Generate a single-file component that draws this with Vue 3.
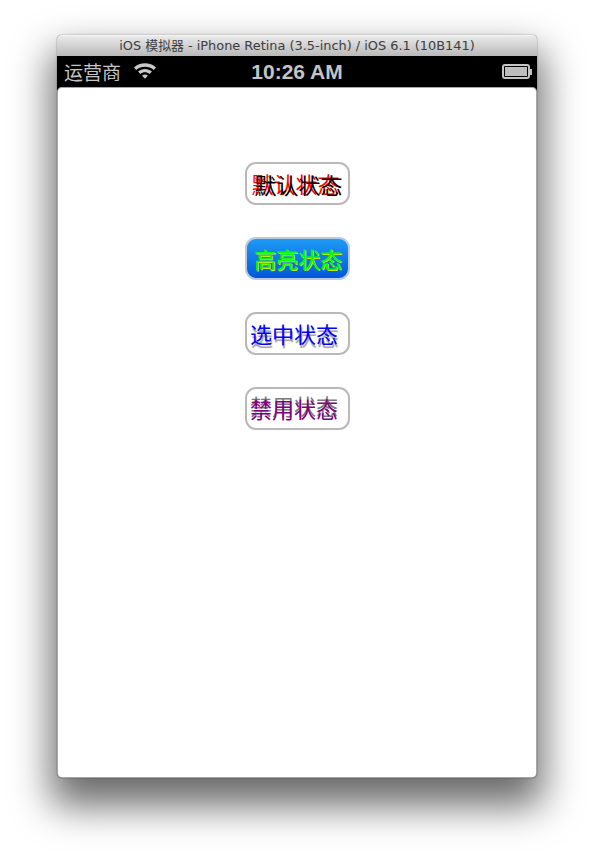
<script setup>
const buttons = [
  { label: '默认状态', kind: 'normal' },
  { label: '高亮状态', kind: 'highlighted' },
  { label: '选中状态', kind: 'selected' },
  { label: '禁用状态', kind: 'disabled' },
]
</script>

<template>
  <div class="page">
    <div class="window">
      <div class="titlebar">iOS 模拟器 - iPhone Retina (3.5-inch) / iOS 6.1 (10B141)</div>
      <div class="statusbar">
        <div class="status-left">
          <span class="carrier">运营商</span>
          <svg class="wifi" width="24" height="18" viewBox="0 0 24 18">
            <path d="M1 6.4C7 0.8 17 0.8 23 6.4L20.8 8.9C16 4.6 8 4.6 3.2 8.9Z" fill="#c9c9c9" />
            <path d="M5.1 10.6C9 7 15 7 18.9 10.6L16.7 13C14 10.6 10 10.6 7.3 13Z" fill="#c9c9c9" />
            <path d="M12 17.8L9.1 14.7C10.8 13.2 13.2 13.2 14.9 14.7Z" fill="#c9c9c9" />
          </svg>
        </div>
        <span class="time">10:26 AM</span>
        <div class="battery">
          <div class="battery-body"><div class="battery-fill"></div></div>
          <div class="battery-cap"></div>
        </div>
      </div>
      <div class="screen">
        <button v-for="b in buttons" :key="b.kind" class="btn" :class="b.kind" type="button">{{ b.label }}</button>
      </div>
    </div>
  </div>
</template>

<style scoped>
.page {
  width: 594px;
  height: 856px;
  padding: 35px 57px 0;
  box-sizing: border-box;
  background: #fff;
  overflow: hidden;
}
.window {
  width: 480px;
  height: 743px;
  display: flex;
  flex-direction: column;
  border-radius: 5px;
  box-shadow: 0 22px 38px 6px rgba(0, 0, 0, 0.58), 0 0 1px 1px rgba(0, 0, 0, 0.12);
  background: #000;
}
.titlebar {
  height: 21px;
  flex: none;
  border-radius: 5px 5px 0 0;
  background: linear-gradient(#ececec, #b9b9b9);
  color: #3d3d3d;
  font: 12.9px/22px "DejaVu Sans", "Noto Sans CJK SC", sans-serif;
  text-align: center;
  white-space: nowrap;
  box-shadow: inset 0 1px 0 #f6f6f6;
}
.statusbar {
  height: 31px;
  flex: none;
  position: relative;
  display: flex;
  align-items: center;
  justify-content: space-between;
  padding: 0 5px 0 7px;
  background: #000;
  color: #c4c4c4;
}
.status-left {
  display: flex;
  align-items: center;
  gap: 12px;
}
.carrier {
  font: 19px/30px "Noto Sans CJK SC", sans-serif;
}
.wifi {
  display: block;
  margin-bottom: 3px;
}
.time {
  position: absolute;
  left: 0;
  right: 0;
  text-align: center;
  font: bold 21px/30px "Liberation Sans", sans-serif;
}
.battery {
  display: flex;
  align-items: center;
}
.battery-body {
  width: 28px;
  height: 15px;
  box-sizing: border-box;
  border: 2px solid #c4c4c4;
  border-radius: 3px;
  padding: 1px;
}
.battery-fill {
  height: 100%;
  background: #bdbdbd;
}
.battery-cap {
  width: 2px;
  height: 6px;
  background: #c4c4c4;
}
.screen {
  flex: 1;
  display: flex;
  flex-direction: column;
  align-items: center;
  gap: 32px;
  padding-top: 75px;
  background: #fff;
  border-radius: 5px;
  box-shadow: inset 0 0 0 1px rgba(0, 0, 0, 0.35);
}
.btn {
  width: 105px;
  height: 43px;
  flex: none;
  padding: 0;
  box-sizing: border-box;
  border: 2px solid #b9b9b9;
  border-radius: 11px;
  background: #fff;
  font: 22px/38px "Noto Sans CJK SC", "Liberation Sans", sans-serif;
  text-align: center;
  white-space: nowrap;
  cursor: pointer;
}
.normal {
  padding: 0 0 0 3px;
  color: #000;
  text-shadow: -3px -1px 0 #f00;
}
.highlighted {
  padding: 0 0 9px 2px;
  color: #00ff00;
  border-color: #bcc9da;
  background: linear-gradient(#1e9bf5, #0058dc);
  text-shadow: 1px 1px 0 #b8f000;
}
.selected {
  padding: 0 6px 7px 0;
  color: #0000ff;
  text-shadow: 1px 3px 1px #9a9a9a;
}
.disabled {
  padding: 0 6px 5px 0;
  color: #800080;
  text-shadow: 0 -3px 0 #7a7a7a;
}
</style>
